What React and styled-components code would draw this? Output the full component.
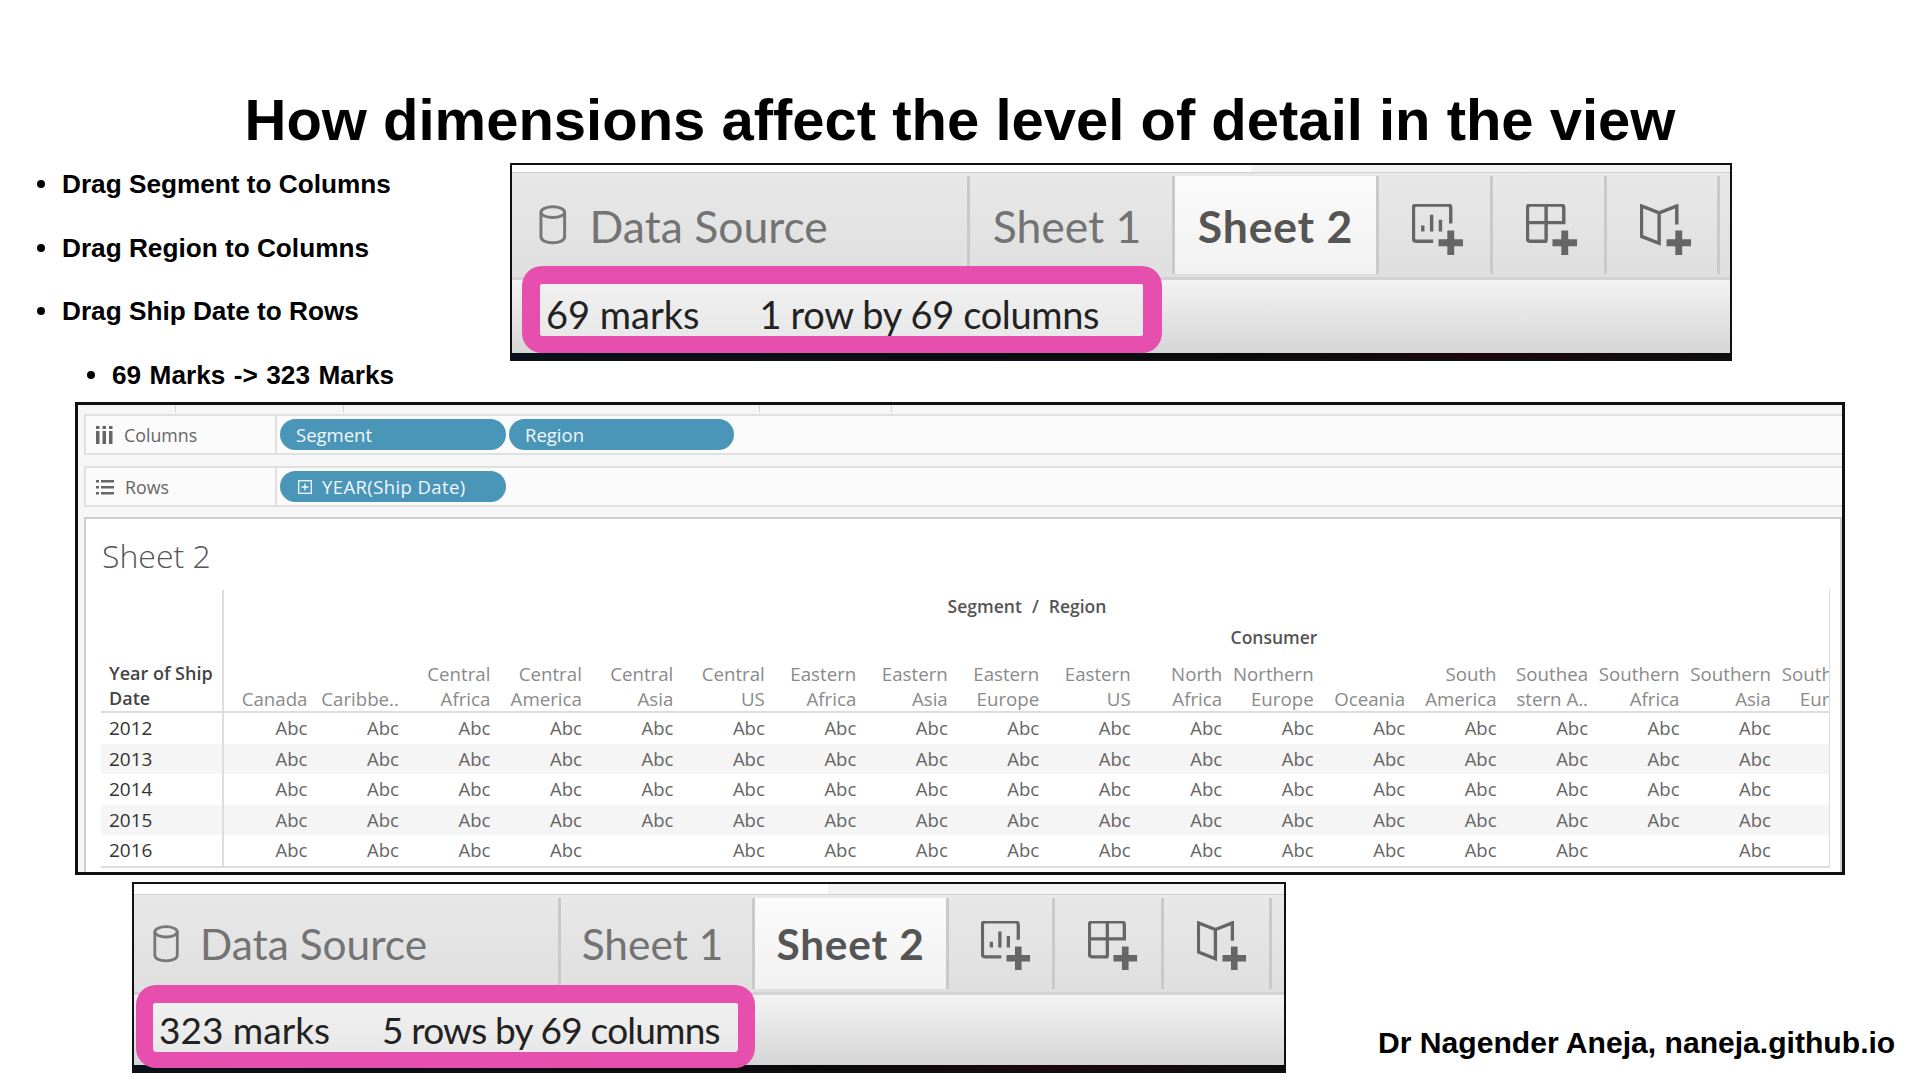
import React from 'react';
import styled, { createGlobalStyle } from 'styled-components';

const GlobalStyle = createGlobalStyle`
  html, body {
    margin: 0;
    padding: 0;
    background: #fff;
  }
`;

const Page = styled.div`
  width: 1920px;
  height: 1080px;
  overflow: hidden;
  background: #fff;
  display: flex;
  flex-direction: column;
  font-family: "Liberation Sans", Arial, sans-serif;
`;

const Title = styled.h1`
  margin: 0;
  height: 163px;
  box-sizing: border-box;
  padding-top: 84px;
  font-size: 58px;
  line-height: 72px;
  font-weight: 700;
  text-align: center;
  color: #000;
`;

const TopRow = styled.div`
  display: flex;
  height: 239px;
`;

const Bullets = styled.ul`
  list-style: none;
  margin: 0;
  padding: 5px 0 0 37px;
  width: 510px;
  box-sizing: border-box;
  flex-shrink: 0;
`;

const Bullet = styled.li`
  position: relative;
  margin: 0 0 31.5px ${(p) => (p.$sub ? '75px' : '25px')};
  font-size: 26.2px;
  word-spacing: ${(p) => (p.$sub ? '1.2px' : '0')};
  line-height: 32px;
  font-weight: 700;
  color: #000;
  white-space: nowrap;

  &::before {
    content: '';
    position: absolute;
    left: -25px;
    top: 12px;
    width: 8px;
    height: 8px;
    border-radius: 50%;
    background: #000;
  }
`;

const Shot = styled.div`
  width: ${(p) => p.$w}px;
  height: ${(p) => p.$h}px;
  box-sizing: border-box;
  border: 2px solid #111;
  position: relative;
  display: flex;
  flex-direction: column;
  flex-shrink: 0;
  font-family: Lato, "Open Sans", sans-serif;
  background: #111;
`;

const Strip = styled.div`
  height: ${(p) => p.$h}px;
  background: linear-gradient(90deg, #fff ${(p) => p.$split}px, #f3f3f3 ${(p) => p.$split}px);
`;

const TabBar = styled.div`
  height: ${(p) => p.$h}px;
  box-sizing: border-box;
  display: flex;
  padding: 3px 0;
  background: linear-gradient(#e8e8e8, #dfdfdf);
  border-top: 1px solid #d0d0d0;
  border-bottom: 3px solid #d2d2d2;
`;

const Tab = styled.div`
  width: ${(p) => p.$w}px;
  flex-shrink: 0;
  box-sizing: border-box;
  display: flex;
  align-items: center;
  justify-content: center;
  border-right: 3px solid #c9c9c9;
  color: ${(p) => (p.$active ? '#555' : '#737373')};
  font-size: ${(p) => p.$size}px;
  font-weight: ${(p) => (p.$active ? 700 : 400)};
  letter-spacing: ${(p) => (p.$active ? '0.8px' : '0')};
  padding-right: ${(p) => (p.$active ? 0 : p.$nudge || 0)}px;
  background: ${(p) => (p.$active ? 'linear-gradient(#fbfbfb, #f1f1f1)' : 'transparent')};
  white-space: nowrap;
`;

const SourceTab = styled(Tab)`
  justify-content: flex-start;
  padding-left: ${(p) => p.$pad}px;
  gap: ${(p) => p.$gap}px;
`;

const IconTab = styled(Tab)`
  padding: ${(p) => p.$top}px 0 0 ${(p) => p.$left}px;
`;

const StatusBar = styled.div`
  height: ${(p) => p.$h}px;
  background: linear-gradient(#f3f3f3, #d5d5d5);
`;

const BlackEdge = styled.div`
  flex: 1;
  background: linear-gradient(90deg, #07121c, #0a0a0a 60%, #1c0810 80%, #0d0d0d);
`;

const Highlight = styled.div`
  position: absolute;
  left: ${(p) => p.$x}px;
  top: ${(p) => p.$y}px;
  width: ${(p) => p.$w}px;
  height: ${(p) => p.$h}px;
  box-sizing: border-box;
  border-style: solid;
  border-color: #e64fae;
  border-width: ${(p) => p.$ring};
  border-radius: 20px;
  background: linear-gradient(#f0f0f0, #e8e8e8);
  background-clip: padding-box;
  display: flex;
  align-items: center;
  padding: ${(p) => p.$top}px 0 0 ${(p) => p.$pad}px;
  gap: ${(p) => p.$gap}px;
  color: #222;
  font-size: ${(p) => p.$size}px;
  white-space: nowrap;
`;

const Dims = styled.span`
  letter-spacing: ${(p) => p.$spread}px;
`;

const Panel = styled.div`
  margin-left: 75px;
  width: 1770px;
  height: 473px;
  box-sizing: border-box;
  border: 3px solid #111;
  background: #f6f6f6;
  display: flex;
  flex-direction: column;
  padding: 0 0 0 6px;
  font-family: "Open Sans", sans-serif;
`;

const Ticks = styled.div`
  height: 9px;
  display: flex;
  flex-shrink: 0;
`;

const Tick = styled.div`
  width: ${(p) => p.$w}px;
  height: 7px;
  border-right: 1px solid #d4d4d4;
  flex-shrink: 0;
`;

const Shelf = styled.div`
  height: 41px;
  box-sizing: border-box;
  margin-bottom: 11px;
  display: flex;
  background: #fbfbfb;
  border: 2px solid #e0e0e0;
  border-right: none;
  flex-shrink: 0;
`;

const ShelfLabel = styled.div`
  width: 191px;
  box-sizing: border-box;
  border-right: 2px solid #e0e0e0;
  padding-left: 10px;
  display: flex;
  align-items: center;
  gap: 11px;
  color: #666;
  font-size: 17.8px;
`;

const PillRow = styled.div`
  display: flex;
  align-items: center;
  gap: 3px;
  padding-left: 3px;
`;

const Pill = styled.div`
  height: 31px;
  width: ${(p) => p.$w}px;
  box-sizing: border-box;
  border-radius: 16px;
  background: #4a96b8;
  color: #f2f7fa;
  font-size: 18.5px;
  letter-spacing: ${(p) => p.$spread || 0}px;
  display: flex;
  align-items: center;
  gap: 10px;
  padding-left: ${(p) => p.$pad}px;
`;

const SheetPanel = styled.div`
  flex: 1;
  background: #fff;
  border: 2px solid #cfcfcf;
  border-bottom: none;
  margin-top: -1px;
  padding-left: 15px;
  display: flex;
  flex-direction: column;
  overflow: hidden;
`;

const SheetTitle = styled.div`
  height: 71px;
  box-sizing: border-box;
  padding: 14px 0 0 1px;
  font-size: 32px;
  line-height: 46px;
  font-weight: 300;
  color: #555;
`;

const TableWrap = styled.div`
  width: 1729px;
  overflow: hidden;
  border-right: 1px solid #ddd;
  box-sizing: border-box;
`;

const HeaderZone = styled.div`
  display: flex;
  height: 123px;
  box-sizing: border-box;
  border-bottom: 2px solid #ddd;
`;

const RowHeading = styled.div`
  width: 123px;
  flex-shrink: 0;
  box-sizing: border-box;
  border-right: 2px solid #ddd;
  padding: 0 0 0 8px;
  display: flex;
  flex-direction: column;
  justify-content: flex-end;
  font-size: 18px;
  line-height: 25px;
  font-weight: 600;
  color: #444;
  white-space: nowrap;
`;

const HeaderBody = styled.div`
  flex: 1;
  min-width: 0;
`;

const FieldTitle = styled.div`
  height: 34px;
  line-height: 33px;
  width: 1606px;
  text-align: center;
  font-size: 17.5px;
  word-spacing: 5.5px;
  font-weight: 600;
  color: #555;
`;

const SegmentTitle = styled.div`
  height: 26px;
  line-height: 26px;
  width: 2100px;
  text-align: center;
  font-size: 17.5px;
  font-weight: 600;
  color: #555;
`;

const ColumnHeads = styled.div`
  display: grid;
  grid-template-columns: repeat(18, 91.47px);
  margin-top: 11px;
`;

const ColumnHead = styled.div`
  box-sizing: border-box;
  padding-right: 8px;
  height: 50px;
  display: flex;
  flex-direction: column;
  justify-content: flex-end;
  align-items: flex-end;
  font-size: 18.7px;
  line-height: 25px;
  color: #8a8a8a;
  white-space: nowrap;
`;

const DataRow = styled.div`
  display: grid;
  grid-template-columns: 123px repeat(18, 91.47px);
  height: 30.5px;
  background: ${(p) => (p.$band ? '#f5f5f5' : '#fff')};
`;

const YearCell = styled.div`
  box-sizing: border-box;
  border-right: 2px solid #ddd;
  padding-left: 8px;
  font-size: 19px;
  line-height: 31px;
  font-weight: 500;
  color: #333;
`;

const MarkCell = styled.div`
  box-sizing: border-box;
  padding-right: 8px;
  text-align: right;
  font-size: 18.5px;
  line-height: 30px;
  color: #666;
`;

const TableEnd = styled.div`
  border-top: 2px solid #ddd;
`;

const BottomRow = styled.div`
  display: flex;
  margin-top: 7px;
  padding-left: 132px;
`;

const Credit = styled.div`
  margin: 143px 0 0 92px;
  font-size: 30.1px;
  line-height: 36px;
  font-weight: 700;
  color: #000;
  white-space: nowrap;
`;

const PLUS = 'M39 27v25M26.5 39.5h25';

function Cylinder({ size }) {
  return (
    <svg width={size * 0.74} height={size} viewBox="0 0 30 40" fill="none" stroke="#777" strokeWidth="3">
      <ellipse cx="15" cy="7" rx="12" ry="5.5" />
      <path d="M3 7v25c0 3.500 5 6 12 6s12-2.500 12-6V7" />
    </svg>
  );
}

function AddChart({ size }) {
  return (
    <svg width={size} height={size} viewBox="0 0 52 53" fill="none" stroke="#666" strokeWidth="3.5">
      <path d="M39 20V4q0-3-3-3H4Q1 1 1 4v31q0 3 3 3h17" />
      <path d="M10.500 22v6M19.500 11v17M28.500 16v12" />
      <path d={PLUS} strokeWidth="7" />
    </svg>
  );
}

function AddDashboard({ size }) {
  return (
    <svg width={size} height={size} viewBox="0 0 52 53" fill="none" stroke="#666" strokeWidth="3.5">
      <path d="M21 38H4q-3 0-3-3V4q0-3 3-3h31q3 0 3 3v15H1M20 1v37" />
      <path d={PLUS} strokeWidth="7" />
    </svg>
  );
}

function AddStory({ size }) {
  return (
    <svg width={size} height={size} viewBox="0 0 52 53" fill="none" stroke="#666" strokeWidth="3.5">
      <path d="M37 21V2L19 9 1 2v31l18 7V9" />
      <path d={PLUS} strokeWidth="7" />
    </svg>
  );
}

function ColumnsIcon() {
  return (
    <svg width="17" height="18" viewBox="0 0 17 18" fill="#666">
      <rect x="0" y="0" width="3.500" height="3" />
      <rect x="6.500" y="0" width="3.500" height="3" />
      <rect x="13" y="0" width="3.500" height="3" />
      <rect x="0" y="5" width="3.500" height="13" />
      <rect x="6.500" y="5" width="3.500" height="13" />
      <rect x="13" y="5" width="3.500" height="13" />
    </svg>
  );
}

function RowsIcon() {
  return (
    <svg width="18" height="16" viewBox="0 0 18 16" fill="#666">
      <rect x="0" y="1" width="3" height="2.500" />
      <rect x="5" y="1" width="13" height="2.500" />
      <rect x="0" y="7" width="3" height="2.500" />
      <rect x="5" y="7" width="13" height="2.500" />
      <rect x="0" y="13" width="3" height="2.500" />
      <rect x="5" y="13" width="13" height="2.500" />
    </svg>
  );
}

function ExpandIcon() {
  return (
    <svg width="14" height="14" viewBox="0 0 14 14" fill="none" stroke="#f2f7fa" strokeWidth="1.300">
      <rect x="0.700" y="0.700" width="12.600" height="12.600" />
      <path d="M3.500 7h7M7 3.500v7" />
    </svg>
  );
}

function TabShot({ spec }) {
  return (
    <Shot $w={spec.w} $h={spec.h}>
      <Strip $h={spec.stripH} $split={spec.split} />
      <TabBar $h={spec.barH}>
        <SourceTab $w={spec.tabs[0]} $size={spec.tabSize} $pad={spec.sourcePad} $gap={spec.sourceGap}>
          <Cylinder size={spec.cylinder} />
          <span>Data Source</span>
        </SourceTab>
        <Tab $w={spec.tabs[1]} $size={spec.tabSize} $nudge={8}>Sheet 1</Tab>
        <Tab $w={spec.tabs[2]} $size={spec.tabSize} $active>Sheet 2</Tab>
        <IconTab $w={spec.tabs[3]} $top={spec.iconTop} $left={spec.iconLeft}><AddChart size={spec.icon} /></IconTab>
        <IconTab $w={spec.tabs[4]} $top={spec.iconTop} $left={spec.iconLeft}><AddDashboard size={spec.icon} /></IconTab>
        <IconTab $w={spec.tabs[5]} $top={spec.iconTop} $left={spec.iconLeft}><AddStory size={spec.icon} /></IconTab>
      </TabBar>
      <StatusBar $h={spec.statusH} />
      <BlackEdge />
      <Highlight
        $x={spec.hl.x}
        $y={spec.hl.y}
        $w={spec.hl.w}
        $h={spec.hl.h}
        $ring={spec.hl.ring}
        $top={spec.hl.top}
        $pad={spec.hl.pad}
        $gap={spec.hl.gap}
        $size={spec.hl.size}
      >
        <span>{spec.marks}</span>
        <Dims $spread={spec.hl.spread}>{spec.dims}</Dims>
      </Highlight>
    </Shot>
  );
}

const topShot = {
  w: 1222,
  h: 198,
  stripH: 7,
  split: 739,
  barH: 108,
  statusH: 73,
  tabs: [458, 205, 204, 114, 114, 113],
  tabSize: 44.5,
  sourcePad: 26,
  sourceGap: 22,
  cylinder: 40,
  icon: 52,
  iconTop: 10,
  iconLeft: 7,
  marks: '69 marks',
  dims: '1 row by 69 columns',
  hl: { x: 10, y: 101, w: 640, h: 87, ring: '18px 19px 17px 18px', top: 8, pad: 6, gap: 60, size: 38, spread: -0.35 },
};

const bottomShot = {
  w: 1154,
  h: 191,
  stripH: 10,
  split: 694,
  barH: 101,
  statusH: 70,
  tabs: [427, 194, 194, 106, 109, 108],
  tabSize: 42.4,
  sourcePad: 18,
  sourceGap: 20,
  cylinder: 38,
  icon: 50,
  iconTop: 5,
  iconLeft: 10,
  marks: '323 marks',
  dims: '5 rows by 69 columns',
  hl: { x: 2, y: 101, w: 619, h: 83, ring: '18px 17px 16px 17px', top: 3, pad: 6, gap: 52, size: 37, spread: -0.8 },
};

const regions = [
  ['Canada'],
  ['Caribbe..'],
  ['Central', 'Africa'],
  ['Central', 'America'],
  ['Central', 'Asia'],
  ['Central', 'US'],
  ['Eastern', 'Africa'],
  ['Eastern', 'Asia'],
  ['Eastern', 'Europe'],
  ['Eastern', 'US'],
  ['North', 'Africa'],
  ['Northern', 'Europe'],
  ['Oceania'],
  ['South', 'America'],
  ['Southea', 'stern A..'],
  ['Southern', 'Africa'],
  ['Southern', 'Asia'],
  ['Southern', 'Europe'],
];

const years = [2012, 2013, 2014, 2015, 2016];

// which region has no mark for a year: last column is cut off by the view
function hasMark(year, index) {
  if (index === 17) return false;
  if (year === 2016 && (index === 4 || index === 15)) return false;
  return true;
}

export default function App() {
  return (
    <Page>
      <GlobalStyle />
      <Title>How dimensions affect the level of detail in the view</Title>
      <TopRow>
        <Bullets>
          <Bullet>Drag Segment to Columns</Bullet>
          <Bullet>Drag Region to Columns</Bullet>
          <Bullet>Drag Ship Date to Rows</Bullet>
          <Bullet $sub>69 Marks -&gt; 323 Marks</Bullet>
        </Bullets>
        <TabShot spec={topShot} />
      </TopRow>
      <Panel>
        <Ticks>
          <Tick $w={91} />
          <Tick $w={167} />
          <Tick $w={415} />
          <Tick $w={131} />
        </Ticks>
        <Shelf>
          <ShelfLabel><ColumnsIcon />Columns</ShelfLabel>
          <PillRow>
            <Pill $w={226} $pad={16}>Segment</Pill>
            <Pill $w={225} $pad={16}>Region</Pill>
          </PillRow>
        </Shelf>
        <Shelf>
          <ShelfLabel><RowsIcon />Rows</ShelfLabel>
          <PillRow>
            <Pill $w={226} $pad={18} $spread={0.4}><ExpandIcon />YEAR(Ship Date)</Pill>
          </PillRow>
        </Shelf>
        <SheetPanel>
          <SheetTitle>Sheet 2</SheetTitle>
          <TableWrap>
            <HeaderZone>
              <RowHeading>
                <span>Year of Ship</span>
                <span>Date</span>
              </RowHeading>
              <HeaderBody>
                <FieldTitle>Segment / Region</FieldTitle>
                <SegmentTitle>Consumer</SegmentTitle>
                <ColumnHeads>
                  {regions.map((lines, i) => (
                    <ColumnHead key={i}>
                      {lines.map((line) => (
                        <span key={line}>{line}</span>
                      ))}
                    </ColumnHead>
                  ))}
                </ColumnHeads>
              </HeaderBody>
            </HeaderZone>
            {years.map((year, r) => (
              <DataRow key={year} $band={r % 2 === 1}>
                <YearCell>{year}</YearCell>
                {regions.map((_, i) => (
                  <MarkCell key={i}>{hasMark(year, i) ? 'Abc' : ''}</MarkCell>
                ))}
              </DataRow>
            ))}
            <TableEnd />
          </TableWrap>
        </SheetPanel>
      </Panel>
      <BottomRow>
        <TabShot spec={bottomShot} />
        <Credit>Dr Nagender Aneja, naneja.github.io</Credit>
      </BottomRow>
    </Page>
  );
}
